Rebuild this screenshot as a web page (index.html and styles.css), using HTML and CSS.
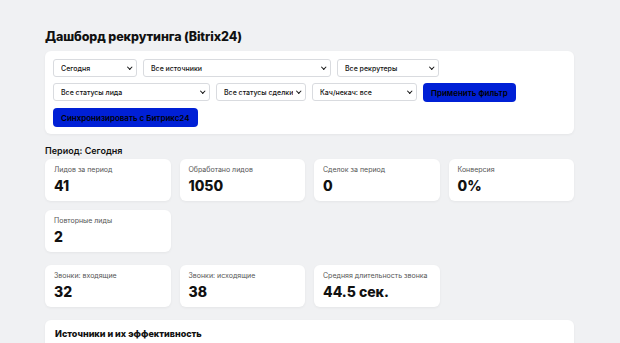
FILE: index.html
```html
<!DOCTYPE html>
<html lang="ru">
<head>
    <meta charset="UTF-8">
    <meta name="viewport" content="width=device-width, initial-scale=1.0">
    <title>Дашборд рекрутинга</title>
    <link rel="stylesheet" href="styles.css">
</head>
<body>
    <div class="container">
        <h1>Дашборд рекрутинга (Bitrix24)</h1>

        <div class="panel filters">
            <div class="row">
                <span class="sel w-period"><select><option>Сегодня</option></select></span>
                <span class="sel w-source"><select><option>Все источники</option></select></span>
                <span class="sel w-recr"><select><option>Все рекрутеры</option></select></span>
            </div>
            <div class="row">
                <span class="sel w-lead"><select><option>Все статусы лида</option></select></span>
                <span class="sel w-deal"><select><option>Все статусы сделки</option></select></span>
                <span class="sel w-qual"><select><option>Кач/некач: все</option></select></span>
                <button class="btn">Применить фильтр</button>
            </div>
            <div class="row">
                <button class="btn">Синхронизировать с Битрикс24</button>
            </div>
        </div>

        <div class="period">Период: Сегодня</div>

        <div class="cards">
            <div class="card"><div class="label">Лидов за период</div><div class="value">41</div></div>
            <div class="card"><div class="label">Обработано лидов</div><div class="value">1050</div></div>
            <div class="card"><div class="label">Сделок за период</div><div class="value">0</div></div>
            <div class="card"><div class="label">Конверсия</div><div class="value">0%</div></div>
            <div class="card"><div class="label">Повторные лиды</div><div class="value">2</div></div>
        </div>

        <div class="cards calls">
            <div class="card"><div class="label">Звонки: входящие</div><div class="value">32</div></div>
            <div class="card"><div class="label">Звонки: исходящие</div><div class="value">38</div></div>
            <div class="card"><div class="label">Средняя длительность звонка</div><div class="value">44.5 сек.</div></div>
        </div>

        <div class="panel sources">
            <h3>Источники и их эффективность</h3>
        </div>
    </div>
</body>
</html>
```

FILE: styles.css
```css
body {
    font-family: Inter, 'DejaVu Sans', sans-serif;
    margin: 0;
    padding: 0;
    background: #f0f1f3;
    color: #111;
}

.container {
    width: 529px;
    margin: 0 45px;
    padding-top: 29px;
}

h1 {
    font-size: 12.5px;
    font-weight: 800;
    margin: 0 0 6px 0;
    line-height: 16px;
    letter-spacing: -0.1px;
}

.panel {
    background: #fff;
    border-radius: 6px;
    box-shadow: 0 1px 3px rgba(0, 0, 0, 0.05);
}

.filters {
    padding: 8px 8px 7px 8px;
    display: flex;
    flex-direction: column;
    gap: 6px;
}

.row {
    display: flex;
    gap: 6px;
}

.sel {
    position: relative;
    display: block;
    height: 18px;
}

.sel::after {
    content: '';
    position: absolute;
    right: 6px;
    top: 6px;
    width: 2.5px;
    height: 2.5px;
    border-right: 1.5px solid #111;
    border-bottom: 1.5px solid #111;
    transform: rotate(45deg);
    pointer-events: none;
}

select {
    appearance: none;
    -webkit-appearance: none;
    display: block;
    box-sizing: border-box;
    font-family: inherit;
    font-size: 7px;
    font-weight: 500;
    width: 100%;
    height: 18px;
    padding: 0 12px 0 7px;
    border: 1px solid #d9dbdf;
    border-radius: 3px;
    background: #fff;
    color: #111;
}

.w-period { width: 84px; }
.w-source { width: 188px; }
.w-recr { width: 102px; }
.w-lead { width: 157px; }
.w-deal { width: 90px; }
.w-qual { width: 105px; }

.btn {
    font-family: inherit;
    font-size: 8px;
    height: 19px;
    padding: 0 8px;
    background: #0020d6;
    color: #000;
    border: none;
    border-radius: 4px;
    font-weight: 600;
}

.period {
    font-size: 9px;
    font-weight: 600;
    margin: 11px 0 3px 0;
    line-height: 11px;
}

.cards {
    display: grid;
    grid-template-columns: repeat(4, 1fr);
    gap: 9px;
}

.calls {
    margin-top: 13px;
}

.card {
    background: #fff;
    border-radius: 6px;
    padding: 7px 9px;
    height: 42px;
    box-sizing: border-box;
    box-shadow: 0 1px 3px rgba(0, 0, 0, 0.05);
}

.label {
    font-size: 7px;
    color: #555;
    line-height: 8px;
}

.value {
    font-size: 14px;
    font-weight: 800;
    line-height: 17px;
    margin-top: 3px;
}

.sources {
    margin-top: 13px;
    padding: 8px 10px;
    height: 40px;
}

.sources h3 {
    font-size: 9px;
    font-weight: 800;
    margin: 0;
    line-height: 11px;
}
```
